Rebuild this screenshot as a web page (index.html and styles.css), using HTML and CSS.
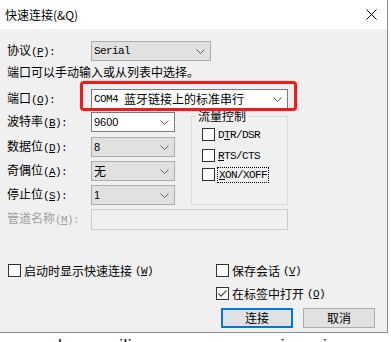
FILE: index.html
```html
<!DOCTYPE html>
<html lang="zh-CN">
<head>
  <meta charset="UTF-8" />
  <meta name="viewport" content="width=device-width, initial-scale=1.0"/>
  <title>快速连接</title>
  <link rel="stylesheet" href="styles.css">
</head>
<body>

  <div class="dialog">
    <div class="titlebar">
      <span class="title">快速连接(&amp;Q)</span>
      <svg class="close" width="11" height="11" viewBox="0 0 11 11">
        <path d="M0.5 0.5L10.5 10.5M10.5 0.5L0.5 10.5" stroke="#000" stroke-width="1" fill="none"/>
      </svg>
    </div>

    <div class="content">
      <div class="row proto-row">
        <span class="label">协议<span class="en">(<u>P</u>):</span></span>
        <div class="combo gray proto">
          <span class="en">Serial</span>
          <svg class="arrow" width="9" height="5" viewBox="0 0 9 5"><path d="M0.5 0.5L4.5 4.5L8.5 0.5" fill="none" stroke="#606060"/></svg>
        </div>
      </div>

      <div class="hint">端口可以手动输入或从列表中选择。</div>

      <div class="row port-row">
        <span class="label">端口<span class="en">(<u>O</u>):</span></span>
        <div class="combo edit port">
          <span class="en">COM4 </span>蓝牙链接上的标准串行
          <svg class="arrow" width="9" height="5" viewBox="0 0 9 5"><path d="M0.5 0.5L4.5 4.5L8.5 0.5" fill="none" stroke="#606060"/></svg>
        </div>
      </div>

      <div class="mid">
        <div class="left">
          <div class="row">
            <span class="label">波特率<span class="en">(<u>B</u>):</span></span>
            <div class="combo edit small">
              <span class="num">9600</span>
              <svg class="arrow" width="9" height="5" viewBox="0 0 9 5"><path d="M0.5 0.5L4.5 4.5L8.5 0.5" fill="none" stroke="#606060"/></svg>
            </div>
          </div>
          <div class="row">
            <span class="label">数据位<span class="en">(<u>D</u>):</span></span>
            <div class="combo gray small">
              <span class="num">8</span>
              <svg class="arrow" width="9" height="5" viewBox="0 0 9 5"><path d="M0.5 0.5L4.5 4.5L8.5 0.5" fill="none" stroke="#606060"/></svg>
            </div>
          </div>
          <div class="row">
            <span class="label">奇偶位<span class="en">(<u>A</u>):</span></span>
            <div class="combo gray small">
              <span>无</span>
              <svg class="arrow" width="9" height="5" viewBox="0 0 9 5"><path d="M0.5 0.5L4.5 4.5L8.5 0.5" fill="none" stroke="#606060"/></svg>
            </div>
          </div>
          <div class="row">
            <span class="label">停止位<span class="en">(<u>S</u>):</span></span>
            <div class="combo gray small">
              <span class="num">1</span>
              <svg class="arrow" width="9" height="5" viewBox="0 0 9 5"><path d="M0.5 0.5L4.5 4.5L8.5 0.5" fill="none" stroke="#606060"/></svg>
            </div>
          </div>
        </div>

        <fieldset class="flow">
          <legend>流量控制</legend>
          <div class="flow-list">
            <label class="check"><span class="box"></span><span class="en">D<u>T</u>R/DSR</span></label>
            <label class="check"><span class="box"></span><span class="en"><u>R</u>TS/CTS</span></label>
            <label class="check"><span class="box"></span><span class="en focus"><u>X</u>ON/XOFF</span></label>
          </div>
        </fieldset>
      </div>

      <div class="row pipe-row">
        <span class="label disabled">管道名称<span class="en">(<u>M</u>):</span></span>
        <div class="textbox"></div>
      </div>

      <div class="options">
        <div class="opt-left">
          <label class="check"><span class="box"></span>启动时显示快速连接<span class="en">(<u>W</u>)</span></label>
        </div>
        <div class="opt-right">
          <label class="check"><span class="box"></span>保存会话<span class="en">(<u>V</u>)</span></label>
          <label class="check"><span class="box checked"><svg width="11" height="11" viewBox="0 0 11 11"><path d="M1.5 5.5L4 8L9.5 2.5" fill="none" stroke="#555" stroke-width="1.3"/></svg></span>在标签中打开<span class="en">(<u>O</u>)</span></label>
          <div class="buttons">
            <button class="btn default">连接</button>
            <button class="btn">取消</button>
          </div>
        </div>
      </div>
    </div>
  </div>

  <div class="backdrop">no decompiling or reverse engineering</div>

</body>
</html>
```

FILE: styles.css
```css
* {
  box-sizing: border-box;
}
body {
  margin: 0;
  background: #fff;
  font-family: "Noto Sans CJK SC", sans-serif;
  font-size: 12px;
  line-height: 14px;
  color: #000;
  height: 342px;
  overflow: hidden;
}
.dialog {
  width: 388px;
  height: 333px;
  background: #f0f0f0;
  border-right: 1px solid #8c8c8c;
  border-bottom: 1px solid #8c8c8c;
}
.titlebar {
  height: 29px;
  background: #fff;
  display: flex;
  align-items: center;
  justify-content: space-between;
  padding: 0 10px 0 5px;
}
.en {
  font-family: "Liberation Mono", monospace;
  font-size: 11px;
  letter-spacing: -0.6px;
  white-space: pre;
}
.num {
  font-family: "Liberation Sans", sans-serif;
  font-size: 11px;
}
.content {
  padding-left: 7px;
}
.row {
  display: flex;
  align-items: center;
  height: 20px;
}
.label {
  width: 84px;
  flex: none;
  white-space: nowrap;
}
.label.disabled {
  color: #a0a0a0;
}
.proto-row {
  margin-top: 12px;
}
.hint {
  margin-top: 1px;
  height: 20px;
  line-height: 20px;
}
.port-row {
  margin-top: 7px;
}
.combo {
  height: 20px;
  display: flex;
  align-items: center;
  padding-left: 2px;
  white-space: nowrap;
}
.combo .arrow {
  margin-left: auto;
  margin-right: 5px;
}
.combo.gray {
  background: #e1e1e1;
  border: 1px solid #adadad;
}
.combo.edit {
  background: #fff;
  border: 1px solid #7a7a7a;
}
.proto {
  width: 120px;
}
.port {
  width: 197px;
  position: relative;
}
.port::after {
  content: "";
  position: absolute;
  left: -12px;
  top: -9px;
  right: -10px;
  bottom: -3px;
  border: 3px solid #f01c1c;
  border-radius: 4px;
  box-shadow: 0 0 1px #f66;
}
.small {
  width: 84px;
}
.mid {
  display: flex;
  margin-top: 1px;
}
.mid .left {
  padding-top: 2px;
}
.mid .left .row + .row {
  margin-top: 4px;
}
.mid .left .row:nth-child(2) {
  margin-top: 5px;
}
.flow {
  margin: 0 0 0 16px;
  padding: 0 0 8px 0;
  width: 97px;
  min-width: 0;
  border: 1px solid #dcdcdc;
}
.flow legend {
  margin-left: 4px;
  padding: 0 2px;
  line-height: 12px;
}
.flow-list {
  padding: 6px 0 0 10px;
  display: flex;
  flex-direction: column;
}
.flow-list .check:nth-child(2) {
  margin-top: 8px;
}
.flow-list .check:nth-child(3) {
  margin-top: 6px;
}
.check {
  display: flex;
  align-items: center;
  height: 13px;
  gap: 3px;
  white-space: nowrap;
}
.box {
  width: 13px;
  height: 13px;
  flex: none;
  border: 1px solid #333;
  background: #fff;
  display: flex;
  align-items: center;
  justify-content: center;
}
.focus {
  outline: 1px dotted #000;
  padding: 0 1px;
}
.pipe-row {
  margin-top: 4px;
}
.textbox {
  width: 197px;
  height: 21px;
  border: 1px solid #cccccc;
  background: #f0f0f0;
}
.options {
  display: flex;
  margin-top: 35px;
  padding-left: 1px;
}
.opt-left {
  width: 208px;
}
.opt-right {
  display: flex;
  flex-direction: column;
}
.opt-right .check + .check {
  margin-top: 10px;
}
.buttons {
  display: flex;
  gap: 10px;
  margin: 8px 0 0 5px;
}
.btn {
  width: 72px;
  height: 20px;
  padding: 0;
  border: 1px solid #adadad;
  background: #e1e1e1;
  font-family: "Noto Sans CJK SC", sans-serif;
  font-size: 12px;
  line-height: 14px;
  color: #000;
}
.btn.default {
  border: 2px solid #0078d7;
}
.backdrop {
  font-family: "Liberation Sans", sans-serif;
  font-size: 19px;
  line-height: 20px;
  padding: 3px 0 0 25px;
  white-space: nowrap;
  color: #222;
}
```
